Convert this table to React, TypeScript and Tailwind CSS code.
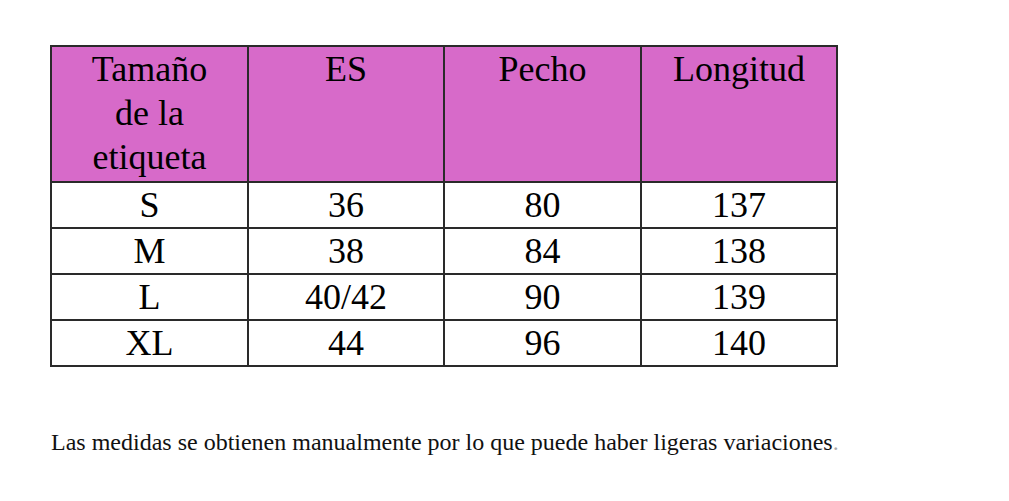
const rows = [
  ["S", "36", "80", "137"],
  ["M", "38", "84", "138"],
  ["L", "40/42", "90", "139"],
  ["XL", "44", "96", "140"],
];

const head = ["ES", "Pecho", "Longitud"];

export default function App() {
  return (
    <div className="h-[501px] w-[1009px] bg-white text-black [font-family:Liberation_Serif]">
      <div className="pl-[50px] pt-[45px]">
        <table className="[font-family:Liberation_Serif] border-collapse table-fixed w-[788px]">
          <colgroup>
            <col className="w-[197px]" />
            <col className="w-[196px]" />
            <col className="w-[197px]" />
            <col className="w-[196px]" />
          </colgroup>
          <thead>
            <tr className="h-[136px] bg-[#d76ac9]">
              <th className="[font-family:Liberation_Serif] border-2 border-[#2a2a2a] align-top px-1 pt-0 text-[36px] font-normal leading-[44px]">
                Tamaño<br />de la<br />etiqueta
              </th>
              {head.map((h) => (
                <th key={h} className="[font-family:Liberation_Serif] border-2 border-[#2a2a2a] align-top pt-0 text-[36px] font-normal leading-[44px]">
                  {h}
                </th>
              ))}
            </tr>
          </thead>
          <tbody>
            {rows.map((r) => (
              <tr key={r[0]} className="h-[46px]">
                {r.map((c, i) => (
                  <td key={i} className="[font-family:Liberation_Serif] border-2 border-[#2a2a2a] p-0 text-center text-[36px] leading-[42px]">
                    {c}
                  </td>
                ))}
              </tr>
            ))}
          </tbody>
        </table>
      </div>
      <p className="[font-family:Liberation_Serif] pl-[51px] pt-[60px] text-[24px] leading-[30px] text-[#111]">
        Las medidas se obtienen manualmente por lo que puede haber ligeras variaciones<span className="text-[#aaa]">.</span>
      </p>
    </div>
  );
}
